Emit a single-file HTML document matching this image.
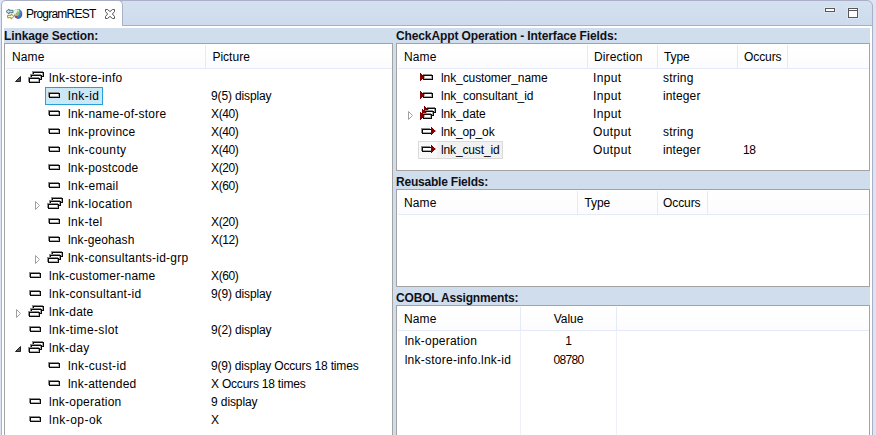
<!DOCTYPE html>
<html><head><meta charset="utf-8"><style>
*{box-sizing:border-box;margin:0;padding:0}
html,body{width:876px;height:435px;overflow:hidden;background:#fff;font-family:"Liberation Sans",sans-serif;font-size:12px;color:#000}
.abs{position:absolute}
#outerL{left:0;top:0;width:2px;height:435px;background:#dfe4f5;border-right:1px solid #a9afc6}
#outerR{left:872px;top:0;width:4px;height:435px;background:#dfe4f5;border-left:1px solid #a9afc6}
#tabbar{left:1px;top:0;width:872px;height:26px;background:linear-gradient(#d4e1f0,#cddbec);border:1px solid #a9afc6;border-radius:6px 6px 0 0}
#tab{left:1px;top:0;width:122px;height:26px;background:#fff;border:1px solid #a9afc6;border-bottom:none;border-radius:5px 5px 0 0}
#comp{left:4px;top:28px;width:866px;height:420px;background:#cfdded}
.band{position:absolute;font-weight:bold;font-size:12px;line-height:14px;height:14px;color:#101018;white-space:nowrap;letter-spacing:-0.12px}
.tbl{position:absolute;background:#fff;border:1px solid #a3a3a3;overflow:hidden}
.hdr{position:absolute;left:0;top:0;height:24px;background:linear-gradient(#fff,#fcfcfe)}
.hline{position:absolute;left:1px;right:0;top:24px;height:1px;background:#e4ebf6}
.sep{position:absolute;top:1px;width:1px;height:23px;background:#e5ebf6}
.vline{position:absolute;top:25px;bottom:0;width:1px;background:#eef1f8}
.t{position:absolute;white-space:pre;font-size:12px;line-height:18px;height:18px}
</style></head><body>
<div class="abs" id="outerL"></div><div class="abs" id="outerR"></div>
<div class="abs" style="left:0;top:0;width:876px;height:10px;background:#dfe4f5"></div>
<div class="abs" id="tabbar"></div>
<div class="abs" id="tab"></div>
<div class="abs" id="comp"></div>
<div class="band" style="left:4px;top:29px">Linkage Section:</div>
<div class="band" style="left:396px;top:29px">CheckAppt Operation - Interface Fields:</div>
<div class="band" style="left:396px;top:175px;letter-spacing:-0.21px">Reusable Fields:</div>
<div class="band" style="left:396px;top:291px;letter-spacing:-0.17px">COBOL Assignments:</div>
<div class="tbl" style="left:4px;top:43px;width:389px;height:400px"><div class="hdr" style="width:387px"></div><div class="hline"></div><div class="sep" style="left:200px"></div></div>
<div class="tbl" style="left:396px;top:43px;width:474px;height:128px"><div class="hdr" style="width:472px"></div><div class="hline"></div><div class="sep" style="left:190px"></div><div class="sep" style="left:260px"></div><div class="sep" style="left:340px"></div><div class="sep" style="left:390px"></div></div>
<div class="tbl" style="left:396px;top:189px;width:474px;height:98px"><div class="hdr" style="width:472px"></div><div class="hline"></div><div class="sep" style="left:180px"></div><div class="sep" style="left:260px"></div><div class="sep" style="left:310px"></div></div>
<div class="tbl" style="left:396px;top:305px;width:474px;height:140px"><div class="hdr" style="width:472px"></div><div class="hline"></div><div class="sep" style="left:123px"></div><div class="sep" style="left:219px"></div><div class="vline" style="left:123px"></div><div class="vline" style="left:219px"></div></div>
<!--ICONS-->
<div class="abs" style="left:32px;top:71px;width:11px;height:5px;background:#8c8c8c"></div><div class="abs" style="left:33px;top:72px;width:11px;height:5px;background:#0a0a0a"></div><div class="abs" style="left:34px;top:73px;width:9px;height:3px;background:#a8a8a8"></div><div class="abs" style="left:34px;top:73px;width:8px;height:2px;background:#fff"></div><div class="abs" style="left:30px;top:74px;width:11px;height:5px;background:#8c8c8c"></div><div class="abs" style="left:31px;top:75px;width:11px;height:5px;background:#0a0a0a"></div><div class="abs" style="left:32px;top:76px;width:9px;height:3px;background:#a8a8a8"></div><div class="abs" style="left:32px;top:76px;width:8px;height:2px;background:#fff"></div><div class="abs" style="left:28px;top:77px;width:11px;height:5px;background:#8c8c8c"></div><div class="abs" style="left:29px;top:78px;width:11px;height:5px;background:#0a0a0a"></div><div class="abs" style="left:30px;top:79px;width:9px;height:3px;background:#a8a8a8"></div><div class="abs" style="left:30px;top:79px;width:8px;height:2px;background:#fff"></div>
<svg class="abs" style="left:15px;top:76px" width="7" height="7"><path d="M5.5,0.5 L5.5,5.5 L0.5,5.5 Z" fill="#5a5a5a" stroke="#222" stroke-width="1"/></svg>
<div class="abs" style="left:45px;top:87px;width:58px;height:18px;background:#cbe8f6;border:1px solid #26a0da"></div>
<div class="abs" style="left:48px;top:92px;width:11px;height:5px;background:#8c8c8c"></div><div class="abs" style="left:49px;top:93px;width:11px;height:5px;background:#0a0a0a"></div><div class="abs" style="left:50px;top:94px;width:9px;height:3px;background:#a8a8a8"></div><div class="abs" style="left:50px;top:94px;width:8px;height:2px;background:#fff"></div>
<div class="abs" style="left:48px;top:110px;width:11px;height:5px;background:#8c8c8c"></div><div class="abs" style="left:49px;top:111px;width:11px;height:5px;background:#0a0a0a"></div><div class="abs" style="left:50px;top:112px;width:9px;height:3px;background:#a8a8a8"></div><div class="abs" style="left:50px;top:112px;width:8px;height:2px;background:#fff"></div>
<div class="abs" style="left:48px;top:128px;width:11px;height:5px;background:#8c8c8c"></div><div class="abs" style="left:49px;top:129px;width:11px;height:5px;background:#0a0a0a"></div><div class="abs" style="left:50px;top:130px;width:9px;height:3px;background:#a8a8a8"></div><div class="abs" style="left:50px;top:130px;width:8px;height:2px;background:#fff"></div>
<div class="abs" style="left:48px;top:146px;width:11px;height:5px;background:#8c8c8c"></div><div class="abs" style="left:49px;top:147px;width:11px;height:5px;background:#0a0a0a"></div><div class="abs" style="left:50px;top:148px;width:9px;height:3px;background:#a8a8a8"></div><div class="abs" style="left:50px;top:148px;width:8px;height:2px;background:#fff"></div>
<div class="abs" style="left:48px;top:164px;width:11px;height:5px;background:#8c8c8c"></div><div class="abs" style="left:49px;top:165px;width:11px;height:5px;background:#0a0a0a"></div><div class="abs" style="left:50px;top:166px;width:9px;height:3px;background:#a8a8a8"></div><div class="abs" style="left:50px;top:166px;width:8px;height:2px;background:#fff"></div>
<div class="abs" style="left:48px;top:182px;width:11px;height:5px;background:#8c8c8c"></div><div class="abs" style="left:49px;top:183px;width:11px;height:5px;background:#0a0a0a"></div><div class="abs" style="left:50px;top:184px;width:9px;height:3px;background:#a8a8a8"></div><div class="abs" style="left:50px;top:184px;width:8px;height:2px;background:#fff"></div>
<div class="abs" style="left:51px;top:197px;width:11px;height:5px;background:#8c8c8c"></div><div class="abs" style="left:52px;top:198px;width:11px;height:5px;background:#0a0a0a"></div><div class="abs" style="left:53px;top:199px;width:9px;height:3px;background:#a8a8a8"></div><div class="abs" style="left:53px;top:199px;width:8px;height:2px;background:#fff"></div><div class="abs" style="left:49px;top:200px;width:11px;height:5px;background:#8c8c8c"></div><div class="abs" style="left:50px;top:201px;width:11px;height:5px;background:#0a0a0a"></div><div class="abs" style="left:51px;top:202px;width:9px;height:3px;background:#a8a8a8"></div><div class="abs" style="left:51px;top:202px;width:8px;height:2px;background:#fff"></div><div class="abs" style="left:47px;top:203px;width:11px;height:5px;background:#8c8c8c"></div><div class="abs" style="left:48px;top:204px;width:11px;height:5px;background:#0a0a0a"></div><div class="abs" style="left:49px;top:205px;width:9px;height:3px;background:#a8a8a8"></div><div class="abs" style="left:49px;top:205px;width:8px;height:2px;background:#fff"></div>
<svg class="abs" style="left:35px;top:201px" width="6" height="10"><path d="M0.5,0.5 L4.5,4.5 L0.5,8.5 Z" fill="#fff" stroke="#a0a0a0" stroke-width="1"/></svg>
<div class="abs" style="left:48px;top:218px;width:11px;height:5px;background:#8c8c8c"></div><div class="abs" style="left:49px;top:219px;width:11px;height:5px;background:#0a0a0a"></div><div class="abs" style="left:50px;top:220px;width:9px;height:3px;background:#a8a8a8"></div><div class="abs" style="left:50px;top:220px;width:8px;height:2px;background:#fff"></div>
<div class="abs" style="left:48px;top:236px;width:11px;height:5px;background:#8c8c8c"></div><div class="abs" style="left:49px;top:237px;width:11px;height:5px;background:#0a0a0a"></div><div class="abs" style="left:50px;top:238px;width:9px;height:3px;background:#a8a8a8"></div><div class="abs" style="left:50px;top:238px;width:8px;height:2px;background:#fff"></div>
<div class="abs" style="left:51px;top:251px;width:11px;height:5px;background:#8c8c8c"></div><div class="abs" style="left:52px;top:252px;width:11px;height:5px;background:#0a0a0a"></div><div class="abs" style="left:53px;top:253px;width:9px;height:3px;background:#a8a8a8"></div><div class="abs" style="left:53px;top:253px;width:8px;height:2px;background:#fff"></div><div class="abs" style="left:49px;top:254px;width:11px;height:5px;background:#8c8c8c"></div><div class="abs" style="left:50px;top:255px;width:11px;height:5px;background:#0a0a0a"></div><div class="abs" style="left:51px;top:256px;width:9px;height:3px;background:#a8a8a8"></div><div class="abs" style="left:51px;top:256px;width:8px;height:2px;background:#fff"></div><div class="abs" style="left:47px;top:257px;width:11px;height:5px;background:#8c8c8c"></div><div class="abs" style="left:48px;top:258px;width:11px;height:5px;background:#0a0a0a"></div><div class="abs" style="left:49px;top:259px;width:9px;height:3px;background:#a8a8a8"></div><div class="abs" style="left:49px;top:259px;width:8px;height:2px;background:#fff"></div>
<svg class="abs" style="left:35px;top:255px" width="6" height="10"><path d="M0.5,0.5 L4.5,4.5 L0.5,8.5 Z" fill="#fff" stroke="#a0a0a0" stroke-width="1"/></svg>
<div class="abs" style="left:29px;top:272px;width:11px;height:5px;background:#8c8c8c"></div><div class="abs" style="left:30px;top:273px;width:11px;height:5px;background:#0a0a0a"></div><div class="abs" style="left:31px;top:274px;width:9px;height:3px;background:#a8a8a8"></div><div class="abs" style="left:31px;top:274px;width:8px;height:2px;background:#fff"></div>
<div class="abs" style="left:29px;top:290px;width:11px;height:5px;background:#8c8c8c"></div><div class="abs" style="left:30px;top:291px;width:11px;height:5px;background:#0a0a0a"></div><div class="abs" style="left:31px;top:292px;width:9px;height:3px;background:#a8a8a8"></div><div class="abs" style="left:31px;top:292px;width:8px;height:2px;background:#fff"></div>
<div class="abs" style="left:32px;top:305px;width:11px;height:5px;background:#8c8c8c"></div><div class="abs" style="left:33px;top:306px;width:11px;height:5px;background:#0a0a0a"></div><div class="abs" style="left:34px;top:307px;width:9px;height:3px;background:#a8a8a8"></div><div class="abs" style="left:34px;top:307px;width:8px;height:2px;background:#fff"></div><div class="abs" style="left:30px;top:308px;width:11px;height:5px;background:#8c8c8c"></div><div class="abs" style="left:31px;top:309px;width:11px;height:5px;background:#0a0a0a"></div><div class="abs" style="left:32px;top:310px;width:9px;height:3px;background:#a8a8a8"></div><div class="abs" style="left:32px;top:310px;width:8px;height:2px;background:#fff"></div><div class="abs" style="left:28px;top:311px;width:11px;height:5px;background:#8c8c8c"></div><div class="abs" style="left:29px;top:312px;width:11px;height:5px;background:#0a0a0a"></div><div class="abs" style="left:30px;top:313px;width:9px;height:3px;background:#a8a8a8"></div><div class="abs" style="left:30px;top:313px;width:8px;height:2px;background:#fff"></div>
<svg class="abs" style="left:16px;top:309px" width="6" height="10"><path d="M0.5,0.5 L4.5,4.5 L0.5,8.5 Z" fill="#fff" stroke="#a0a0a0" stroke-width="1"/></svg>
<div class="abs" style="left:29px;top:326px;width:11px;height:5px;background:#8c8c8c"></div><div class="abs" style="left:30px;top:327px;width:11px;height:5px;background:#0a0a0a"></div><div class="abs" style="left:31px;top:328px;width:9px;height:3px;background:#a8a8a8"></div><div class="abs" style="left:31px;top:328px;width:8px;height:2px;background:#fff"></div>
<div class="abs" style="left:32px;top:341px;width:11px;height:5px;background:#8c8c8c"></div><div class="abs" style="left:33px;top:342px;width:11px;height:5px;background:#0a0a0a"></div><div class="abs" style="left:34px;top:343px;width:9px;height:3px;background:#a8a8a8"></div><div class="abs" style="left:34px;top:343px;width:8px;height:2px;background:#fff"></div><div class="abs" style="left:30px;top:344px;width:11px;height:5px;background:#8c8c8c"></div><div class="abs" style="left:31px;top:345px;width:11px;height:5px;background:#0a0a0a"></div><div class="abs" style="left:32px;top:346px;width:9px;height:3px;background:#a8a8a8"></div><div class="abs" style="left:32px;top:346px;width:8px;height:2px;background:#fff"></div><div class="abs" style="left:28px;top:347px;width:11px;height:5px;background:#8c8c8c"></div><div class="abs" style="left:29px;top:348px;width:11px;height:5px;background:#0a0a0a"></div><div class="abs" style="left:30px;top:349px;width:9px;height:3px;background:#a8a8a8"></div><div class="abs" style="left:30px;top:349px;width:8px;height:2px;background:#fff"></div>
<svg class="abs" style="left:15px;top:346px" width="7" height="7"><path d="M5.5,0.5 L5.5,5.5 L0.5,5.5 Z" fill="#5a5a5a" stroke="#222" stroke-width="1"/></svg>
<div class="abs" style="left:48px;top:362px;width:11px;height:5px;background:#8c8c8c"></div><div class="abs" style="left:49px;top:363px;width:11px;height:5px;background:#0a0a0a"></div><div class="abs" style="left:50px;top:364px;width:9px;height:3px;background:#a8a8a8"></div><div class="abs" style="left:50px;top:364px;width:8px;height:2px;background:#fff"></div>
<div class="abs" style="left:48px;top:380px;width:11px;height:5px;background:#8c8c8c"></div><div class="abs" style="left:49px;top:381px;width:11px;height:5px;background:#0a0a0a"></div><div class="abs" style="left:50px;top:382px;width:9px;height:3px;background:#a8a8a8"></div><div class="abs" style="left:50px;top:382px;width:8px;height:2px;background:#fff"></div>
<div class="abs" style="left:29px;top:398px;width:11px;height:5px;background:#8c8c8c"></div><div class="abs" style="left:30px;top:399px;width:11px;height:5px;background:#0a0a0a"></div><div class="abs" style="left:31px;top:400px;width:9px;height:3px;background:#a8a8a8"></div><div class="abs" style="left:31px;top:400px;width:8px;height:2px;background:#fff"></div>
<div class="abs" style="left:29px;top:416px;width:11px;height:5px;background:#8c8c8c"></div><div class="abs" style="left:30px;top:417px;width:11px;height:5px;background:#0a0a0a"></div><div class="abs" style="left:31px;top:418px;width:9px;height:3px;background:#a8a8a8"></div><div class="abs" style="left:31px;top:418px;width:8px;height:2px;background:#fff"></div>
<div class="abs" style="left:423px;top:74px;width:9px;height:1px;background:#8c8c8c"></div><div class="abs" style="left:423px;top:75px;width:10px;height:5px;background:#0a0a0a"></div><div class="abs" style="left:424px;top:76px;width:8px;height:3px;background:#a8a8a8"></div><div class="abs" style="left:424px;top:76px;width:7px;height:2px;background:#fff"></div><div class="abs" style="left:420px;top:73px;width:1px;height:8px;background:#800000"></div><div class="abs" style="left:421px;top:74px;width:1px;height:6px;background:#800000"></div><div class="abs" style="left:422px;top:75px;width:1px;height:4px;background:#800000"></div><div class="abs" style="left:423px;top:76px;width:1px;height:2px;background:#800000"></div><div class="abs" style="left:424px;top:76px;width:1px;height:2px;background:#800000;opacity:.35"></div>
<div class="abs" style="left:423px;top:92px;width:9px;height:1px;background:#8c8c8c"></div><div class="abs" style="left:423px;top:93px;width:10px;height:5px;background:#0a0a0a"></div><div class="abs" style="left:424px;top:94px;width:8px;height:3px;background:#a8a8a8"></div><div class="abs" style="left:424px;top:94px;width:7px;height:2px;background:#fff"></div><div class="abs" style="left:420px;top:91px;width:1px;height:8px;background:#800000"></div><div class="abs" style="left:421px;top:92px;width:1px;height:6px;background:#800000"></div><div class="abs" style="left:422px;top:93px;width:1px;height:4px;background:#800000"></div><div class="abs" style="left:423px;top:94px;width:1px;height:2px;background:#800000"></div><div class="abs" style="left:424px;top:94px;width:1px;height:2px;background:#800000;opacity:.35"></div>
<div class="abs" style="left:427px;top:107px;width:8px;height:1px;background:#8c8c8c"></div><div class="abs" style="left:427px;top:108px;width:9px;height:5px;background:#0a0a0a"></div><div class="abs" style="left:428px;top:109px;width:7px;height:3px;background:#a8a8a8"></div><div class="abs" style="left:428px;top:109px;width:6px;height:2px;background:#fff"></div><div class="abs" style="left:424px;top:106px;width:1px;height:8px;background:#800000"></div><div class="abs" style="left:425px;top:107px;width:1px;height:6px;background:#800000"></div><div class="abs" style="left:426px;top:108px;width:1px;height:4px;background:#800000"></div><div class="abs" style="left:427px;top:109px;width:1px;height:2px;background:#800000"></div><div class="abs" style="left:428px;top:109px;width:1px;height:2px;background:#800000;opacity:.35"></div><div class="abs" style="left:425px;top:110px;width:8px;height:1px;background:#8c8c8c"></div><div class="abs" style="left:425px;top:111px;width:9px;height:5px;background:#0a0a0a"></div><div class="abs" style="left:426px;top:112px;width:7px;height:3px;background:#a8a8a8"></div><div class="abs" style="left:426px;top:112px;width:6px;height:2px;background:#fff"></div><div class="abs" style="left:422px;top:109px;width:1px;height:8px;background:#800000"></div><div class="abs" style="left:423px;top:110px;width:1px;height:6px;background:#800000"></div><div class="abs" style="left:424px;top:111px;width:1px;height:4px;background:#800000"></div><div class="abs" style="left:425px;top:112px;width:1px;height:2px;background:#800000"></div><div class="abs" style="left:426px;top:112px;width:1px;height:2px;background:#800000;opacity:.35"></div><div class="abs" style="left:423px;top:113px;width:8px;height:1px;background:#8c8c8c"></div><div class="abs" style="left:423px;top:114px;width:9px;height:5px;background:#0a0a0a"></div><div class="abs" style="left:424px;top:115px;width:7px;height:3px;background:#a8a8a8"></div><div class="abs" style="left:424px;top:115px;width:6px;height:2px;background:#fff"></div><div class="abs" style="left:420px;top:112px;width:1px;height:8px;background:#800000"></div><div class="abs" style="left:421px;top:113px;width:1px;height:6px;background:#800000"></div><div class="abs" style="left:422px;top:114px;width:1px;height:4px;background:#800000"></div><div class="abs" style="left:423px;top:115px;width:1px;height:2px;background:#800000"></div><div class="abs" style="left:424px;top:115px;width:1px;height:2px;background:#800000;opacity:.35"></div>
<svg class="abs" style="left:408px;top:111px" width="6" height="10"><path d="M0.5,0.5 L4.5,4.5 L0.5,8.5 Z" fill="#fff" stroke="#a0a0a0" stroke-width="1"/></svg>
<div class="abs" style="left:421px;top:128px;width:9px;height:5px;background:#8c8c8c"></div><div class="abs" style="left:422px;top:129px;width:9px;height:5px;background:#0a0a0a"></div><div class="abs" style="left:423px;top:130px;width:8px;height:3px;background:#a8a8a8"></div><div class="abs" style="left:423px;top:130px;width:8px;height:2px;background:#fff"></div><div class="abs" style="left:431px;top:127px;width:1px;height:8px;background:#800000"></div><div class="abs" style="left:432px;top:128px;width:1px;height:6px;background:#800000"></div><div class="abs" style="left:433px;top:129px;width:1px;height:4px;background:#800000"></div><div class="abs" style="left:434px;top:130px;width:1px;height:2px;background:#800000"></div><div class="abs" style="left:435px;top:130px;width:1px;height:2px;background:#800000;opacity:.35"></div>
<div class="abs" style="left:418px;top:141px;width:85px;height:18px;background:#f1f1f1;border:1px solid #dadada"></div><div class="abs" style="left:419px;top:142px;width:18px;height:16px;background:#f8f8f8"></div>
<div class="abs" style="left:421px;top:146px;width:9px;height:5px;background:#8c8c8c"></div><div class="abs" style="left:422px;top:147px;width:9px;height:5px;background:#0a0a0a"></div><div class="abs" style="left:423px;top:148px;width:8px;height:3px;background:#a8a8a8"></div><div class="abs" style="left:423px;top:148px;width:8px;height:2px;background:#fff"></div><div class="abs" style="left:431px;top:145px;width:1px;height:8px;background:#800000"></div><div class="abs" style="left:432px;top:146px;width:1px;height:6px;background:#800000"></div><div class="abs" style="left:433px;top:147px;width:1px;height:4px;background:#800000"></div><div class="abs" style="left:434px;top:148px;width:1px;height:2px;background:#800000"></div><div class="abs" style="left:435px;top:148px;width:1px;height:2px;background:#800000;opacity:.35"></div>
<!--TEXT-->
<span class="t" style="left:49px;top:69px;letter-spacing:0.296px">lnk-store-info</span>
<span class="t" style="left:68px;top:87px;letter-spacing:0.469px">lnk-id</span>
<span class="t" style="left:211px;top:87px;letter-spacing:-0.128px">9(5) display</span>
<span class="t" style="left:68px;top:105px;letter-spacing:0.263px">lnk-name-of-store</span>
<span class="t" style="left:211px;top:105px;letter-spacing:-0.369px">X(40)</span>
<span class="t" style="left:68px;top:123px;letter-spacing:0.233px">lnk-province</span>
<span class="t" style="left:211px;top:123px;letter-spacing:-0.369px">X(40)</span>
<span class="t" style="left:68px;top:141px;letter-spacing:0.380px">lnk-county</span>
<span class="t" style="left:211px;top:141px;letter-spacing:-0.369px">X(40)</span>
<span class="t" style="left:68px;top:159px;letter-spacing:0.204px">lnk-postcode</span>
<span class="t" style="left:211px;top:159px;letter-spacing:-0.369px">X(20)</span>
<span class="t" style="left:68px;top:177px;letter-spacing:0.276px">lnk-email</span>
<span class="t" style="left:211px;top:177px;letter-spacing:-0.369px">X(60)</span>
<span class="t" style="left:68px;top:195px;letter-spacing:0.316px">lnk-location</span>
<span class="t" style="left:68px;top:213px;letter-spacing:0.355px">lnk-tel</span>
<span class="t" style="left:211px;top:213px;letter-spacing:-0.369px">X(20)</span>
<span class="t" style="left:68px;top:231px;letter-spacing:0.101px">lnk-geohash</span>
<span class="t" style="left:211px;top:231px;letter-spacing:-0.369px">X(12)</span>
<span class="t" style="left:68px;top:249px;letter-spacing:0.263px">lnk-consultants-id-grp</span>
<span class="t" style="left:49px;top:267px;letter-spacing:0.223px">lnk-customer-name</span>
<span class="t" style="left:211px;top:267px;letter-spacing:-0.369px">X(60)</span>
<span class="t" style="left:49px;top:285px;letter-spacing:0.301px">lnk-consultant-id</span>
<span class="t" style="left:211px;top:285px;letter-spacing:-0.128px">9(9) display</span>
<span class="t" style="left:49px;top:303px;letter-spacing:0.225px">lnk-date</span>
<span class="t" style="left:49px;top:321px;letter-spacing:0.370px">lnk-time-slot</span>
<span class="t" style="left:211px;top:321px;letter-spacing:-0.128px">9(2) display</span>
<span class="t" style="left:49px;top:339px;letter-spacing:0.259px">lnk-day</span>
<span class="t" style="left:68px;top:357px;letter-spacing:0.347px">lnk-cust-id</span>
<span class="t" style="left:211px;top:357px;letter-spacing:-0.163px">9(9) display Occurs 18 times</span>
<span class="t" style="left:68px;top:375px;letter-spacing:0.204px">lnk-attended</span>
<span class="t" style="left:211px;top:375px;letter-spacing:-0.208px">X Occurs 18 times</span>
<span class="t" style="left:49px;top:393px;letter-spacing:0.240px">lnk-operation</span>
<span class="t" style="left:211px;top:393px;letter-spacing:-0.097px">9 display</span>
<span class="t" style="left:49px;top:411px;letter-spacing:0.460px">lnk-op-ok</span>
<span class="t" style="left:211px;top:411px;letter-spacing:-0.516px">X</span>
<span class="t" style="left:12px;top:48px;letter-spacing:0.121px">Name</span>
<span class="t" style="left:212.4px;top:48px;letter-spacing:0.020px">Picture</span>
<span class="t" style="left:441px;top:69px;letter-spacing:-0.092px">lnk_customer_name</span>
<span class="t" style="left:593px;top:69px;letter-spacing:0.359px">Input</span>
<span class="t" style="left:663px;top:69px;letter-spacing:0.193px">string</span>
<span class="t" style="left:441px;top:87px;letter-spacing:-0.014px">lnk_consultant_id</span>
<span class="t" style="left:593px;top:87px;letter-spacing:0.359px">Input</span>
<span class="t" style="left:663px;top:87px;letter-spacing:0.114px">integer</span>
<span class="t" style="left:441px;top:105px;letter-spacing:-0.109px">lnk_date</span>
<span class="t" style="left:593px;top:105px;letter-spacing:0.359px">Input</span>
<span class="t" style="left:441px;top:123px;letter-spacing:-0.135px">lnk_op_ok</span>
<span class="t" style="left:593px;top:123px;letter-spacing:0.411px">Output</span>
<span class="t" style="left:663px;top:123px;letter-spacing:0.193px">string</span>
<span class="t" style="left:441px;top:141px;letter-spacing:-0.141px">lnk_cust_id</span>
<span class="t" style="left:593px;top:141px;letter-spacing:0.411px">Output</span>
<span class="t" style="left:663px;top:141px;letter-spacing:0.114px">integer</span>
<span class="t" style="left:743px;top:141px;letter-spacing:-0.430px">18</span>
<span class="t" style="left:404px;top:48px;letter-spacing:0.121px">Name</span>
<span class="t" style="left:594px;top:48px;letter-spacing:0.127px">Direction</span>
<span class="t" style="left:664px;top:48px;letter-spacing:-0.129px">Type</span>
<span class="t" style="left:744px;top:48px;letter-spacing:-0.086px">Occurs</span>
<span class="t" style="left:404px;top:194px;letter-spacing:0.121px">Name</span>
<span class="t" style="left:584.5px;top:194px;letter-spacing:-0.129px">Type</span>
<span class="t" style="left:663px;top:194px;letter-spacing:-0.086px">Occurs</span>
<span class="t" style="left:404px;top:310px;letter-spacing:0.121px">Name</span>
<span class="t" style="left:553.75px;top:310px;letter-spacing:-0.062px">Value</span>
<span class="t" style="left:404.7px;top:332px;letter-spacing:0.240px">lnk-operation</span>
<span class="t" style="left:565.25px;top:332px;letter-spacing:-0.188px">1</span>
<span class="t" style="left:404.7px;top:351px;letter-spacing:0.244px">lnk-store-info.lnk-id</span>
<span class="t" style="left:553.5px;top:351px;letter-spacing:-0.675px">08780</span>
<span class="t" style="left:26px;top:5px;letter-spacing:-0.776px">ProgramREST</span>

<svg class="abs" style="left:5px;top:8px" width="19" height="12" viewBox="0 0 19 12">
 <defs><radialGradient id="gl" cx="0.4" cy="0.35" r="0.8"><stop offset="0" stop-color="#8fb4e6"/><stop offset="0.55" stop-color="#4673c4"/><stop offset="1" stop-color="#3358a8"/></radialGradient></defs>
 <ellipse cx="13.1" cy="6" rx="4.2" ry="5" fill="url(#gl)"/>
 <path d="M9,3 C9.6,1.6 11.4,0.9 13,1.1 C14.2,1.8 15,3 14.4,4.2 C13.8,5.4 14.2,6.6 13.2,7.4 C12.2,8.2 11.2,8.6 10.2,8.2 C9,7.2 8.5,4.8 9,3 Z" fill="#8cc07a"/>
 <path d="M8.9,3.4 C9.4,1.8 11,1 12.2,1.2 L12.8,2.8 L11.6,4.4 L10.4,6.4 L9.2,6.6 Z" fill="#f3f6f0" opacity="0.92"/>
 <path d="M12.4,1.6 L14,2 L14.2,3.4 L13,3.8 Z" fill="#d5ecd8" opacity="0.85"/>
 <path d="M10.6,6.2 L12.6,5 L13,6.8 L11.6,7.8 Z" fill="#b8a860" opacity="0.6"/>
 <rect x="10.6" y="8.2" width="1.2" height="1.2" fill="#c41818"/>
 <path d="M1,3.5 L4,1 L4,2.3 L8,2.3 L8,4.7 L4,4.7 L4,6 Z" fill="#b6def8" stroke="#56788c" stroke-width="1" stroke-linejoin="miter"/>
 <path d="M9,8.5 L6.2,6 L6.2,7.3 L2.6,7.3 L2.6,9.7 L6.2,9.7 L6.2,11 Z" fill="#fff8cc" stroke="#b08c14" stroke-width="1" stroke-linejoin="miter"/>
</svg>
<svg class="abs" style="left:105px;top:9px" width="10" height="10" viewBox="0 0 10 10"><path d="M0.5,0.5 L2.5,0.5 L5,2.6 L7.5,0.5 L9.5,0.5 L9.5,2.5 L7.4,5 L9.5,7.5 L9.5,9.5 L7.5,9.5 L5,7.4 L2.5,9.5 L0.5,9.5 L0.5,7.5 L2.6,5 L0.5,2.5 Z" fill="#fff" stroke="#555" stroke-width="1"/></svg>
<div class="abs" style="left:824px;top:7px;width:12px;height:6px;background:#dbe7f4"></div>
<div class="abs" style="left:825px;top:8px;width:10px;height:4px;background:#fff;border:1px solid #585858"></div>
<div class="abs" style="left:847px;top:7px;width:12px;height:12px;background:#dbe7f4"></div>
<div class="abs" style="left:848px;top:8px;width:10px;height:10px;background:#fff;border:1px solid #585858"></div>
<div class="abs" style="left:849px;top:10px;width:8px;height:1px;background:#585858"></div>

</body></html>
